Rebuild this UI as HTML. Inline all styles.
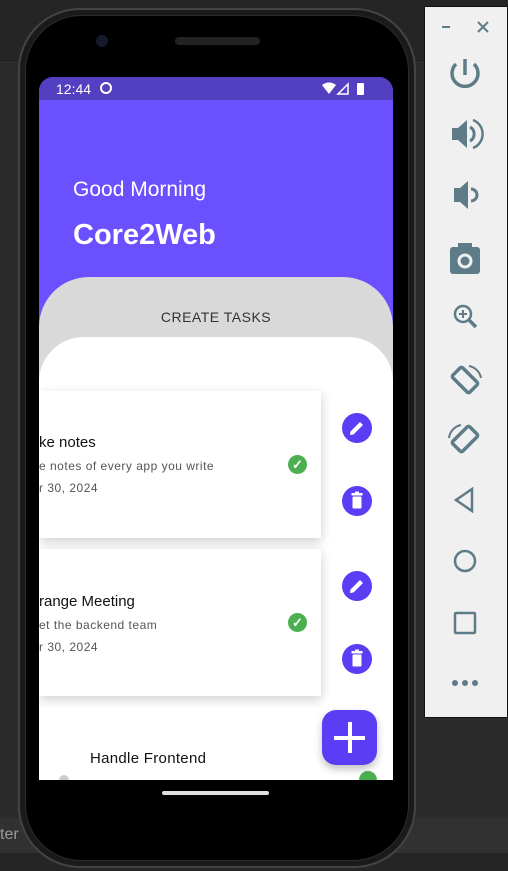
<!DOCTYPE html>
<html><head><meta charset="utf-8">
<style>
*{margin:0;padding:0;box-sizing:border-box}
body{width:508px;height:871px;background:#2b2b2b;position:relative;overflow:hidden;font-family:"Liberation Sans",sans-serif}
.abs{position:absolute}
</style></head><body>
<div class="abs" style="left:0;top:0;width:508px;height:62px;background:#252526"></div>
<div class="abs" style="left:0;top:62px;width:508px;height:34px;background:#2a2a2a;border-top:1px solid #333"></div>
<div class="abs" style="left:0;top:818px;width:508px;height:35px;background:#313131"></div>
<div class="abs" style="left:0;top:853px;width:508px;height:18px;background:#252525"></div>
<div class="abs" style="left:0;top:826px;color:#9a9a9a;font-size:16px">ter</div>

<div class="abs" style="left:18px;top:8px;width:398px;height:860px;border-radius:62px;background:#1a1a1a;border:2px solid #444"></div>
<div class="abs" style="left:25px;top:15px;width:384px;height:846px;border-radius:56px;background:#000;border:1px solid #2c2c2c"></div>
<div class="abs" style="left:96px;top:35px;width:12px;height:12px;border-radius:50%;background:#141a2a"></div>
<div class="abs" style="left:175px;top:37px;width:85px;height:8px;border-radius:4px;background:#222"></div>
<div class="abs" style="left:162px;top:791px;width:107px;height:4px;border-radius:2px;background:#e0e0e0"></div>

<div class="abs" style="left:39px;top:77px;width:354px;height:703px;background:#6a50ff;border-radius:14px 14px 0 0;overflow:hidden">
  <div class="abs" style="left:0;top:0;width:354px;height:23px;background:#5340c0"></div>
  <div class="abs" style="left:17px;top:4px;color:#fff;font-size:14px">12:44</div>
  <div class="abs" style="left:61px;top:5px;width:12px;height:12px;border-radius:50%;border:2px solid #fff"></div>
  <svg class="abs" style="left:283px;top:5px" width="48" height="14" viewBox="0 0 48 14">
    <path d="M0 3 Q7 -2 14 3 L7 12Z" fill="#fff"/>
    <path d="M16 12 L26 2 L26 12Z" fill="none" stroke="#fff" stroke-width="1.5"/>
    <rect x="35" y="1" width="7" height="12" rx="1" fill="#fff"/>
  </svg>
  <div class="abs" style="left:34px;top:101px;color:#fff;font-size:21px">Good Morning</div>
  <div class="abs" style="left:34px;top:142px;color:#fff;font-size:29px;font-weight:bold">Core2Web</div>

  <div class="abs" style="left:0;top:200px;width:354px;height:520px;background:#d9d9d9;border-radius:50px 50px 0 0"></div>
  <div class="abs" style="left:0;top:232px;width:354px;text-align:center;color:#333;font-size:14px;letter-spacing:.5px">CREATE TASKS</div>
  <div class="abs" style="left:0;top:260px;width:354px;height:460px;background:#fff;border-radius:45px 45px 0 0"></div>

  <div class="abs" style="left:0;top:314px;width:282px;height:147px;background:#fff;box-shadow:0 6px 10px rgba(0,0,0,.12),3px 0 10px rgba(0,0,0,.06)"></div>
  <div class="abs" style="left:0;top:357px;color:#111;font-size:15px">ke notes</div>
  <div class="abs" style="left:0;top:382px;color:#555;font-size:12px;letter-spacing:.5px">e notes of every app you write</div>
  <div class="abs" style="left:0;top:404px;color:#555;font-size:12px;letter-spacing:.5px">r 30, 2024</div>
  <div class="abs" style="left:249px;top:378px;width:19px;height:19px;border-radius:50%;background:#4caf50;color:#fff;font-size:13px;line-height:19px;text-align:center;font-weight:bold">✓</div>

  <div class="abs" style="left:0;top:472px;width:282px;height:147px;background:#fff;box-shadow:0 6px 10px rgba(0,0,0,.12),3px 0 10px rgba(0,0,0,.06)"></div>
  <div class="abs" style="left:0;top:516px;color:#111;font-size:15px">range Meeting</div>
  <div class="abs" style="left:0;top:541px;color:#555;font-size:12px;letter-spacing:.5px">et the backend team</div>
  <div class="abs" style="left:0;top:563px;color:#555;font-size:12px;letter-spacing:.5px">r 30, 2024</div>
  <div class="abs" style="left:249px;top:536px;width:19px;height:19px;border-radius:50%;background:#4caf50;color:#fff;font-size:13px;line-height:19px;text-align:center;font-weight:bold">✓</div>

  <svg class="abs" style="left:303px;top:336px" width="30" height="200" viewBox="0 0 30 200">
    <circle cx="15" cy="15" r="15" fill="#5b3df5"/>
    <path d="M8 22 L8.5 18.5 L18 9 L21 12 L11.5 21.5Z" fill="#fff"/>
    <circle cx="15" cy="88" r="15" fill="#5b3df5"/>
    <rect x="9.5" y="80" width="11" height="2.5" fill="#fff"/><rect x="13" y="78.5" width="4" height="2" fill="#fff"/>
    <rect x="10.5" y="83.5" width="9" height="12" rx="1" fill="#fff"/>
    <circle cx="15" cy="173" r="15" fill="#5b3df5"/>
    <path d="M8 180 L8.5 176.5 L18 167 L21 170 L11.5 179.5Z" fill="#fff"/>
  </svg>
  <svg class="abs" style="left:303px;top:567px" width="30" height="30" viewBox="0 0 30 30">
    <circle cx="15" cy="15" r="15" fill="#5b3df5"/>
    <rect x="9.5" y="7" width="11" height="2.5" fill="#fff"/><rect x="13" y="5.5" width="4" height="2" fill="#fff"/>
    <rect x="10.5" y="10.5" width="9" height="12" rx="1" fill="#fff"/>
  </svg>

  <div class="abs" style="left:0;top:631px;width:354px;height:80px;background:#fff"></div>
  <div class="abs" style="left:51px;top:673px;color:#111;font-size:15px;letter-spacing:.3px">Handle Frontend</div>
  <div class="abs" style="left:20px;top:698px;width:10px;height:10px;border-radius:50%;background:#ccc"></div>
  <div class="abs" style="left:320px;top:694px;width:18px;height:18px;border-radius:50%;background:#4caf50"></div>

  <div class="abs" style="left:283px;top:633px;width:55px;height:55px;border-radius:14px;background:#5b3df5;box-shadow:0 4px 8px rgba(0,0,0,.25)"></div>
  <div class="abs" style="left:295px;top:659px;width:31px;height:4px;background:#fff"></div>
  <div class="abs" style="left:309px;top:645px;width:4px;height:31px;background:#fff"></div>
</div>

<div class="abs" style="left:424px;top:6px;width:84px;height:712px;background:#f0f0f0;border:1px solid #111"></div>
<svg class="abs" style="left:425px;top:7px" width="82" height="710" viewBox="0 0 82 710" fill="none" stroke="#5e7c88" stroke-width="3.5">
  <path d="M17 20 H25" stroke-width="2"/>
  <path d="M53 15 L63 25 M63 15 L53 25" stroke-width="2"/>
  <path d="M40 52 V68" /><path d="M31 57 A13 13 0 1 0 49 57"/>
  <path d="M27 121 H33 L42 113 V141 L33 133 H27Z" fill="#5e7c88" stroke="none"/>
  <path d="M45 120 A8 8 0 0 1 45 134" stroke-width="3"/>
  <path d="M48 113 A15 15 0 0 1 48 141" stroke-width="2.5"/>
  <path d="M29 181 H35 L43 174 V202 L35 195 H29Z" fill="#5e7c88" stroke="none"/>
  <path d="M46 182 A6 6 0 0 1 46 194" stroke-width="3"/>
  <rect x="25" y="240" width="30" height="27" rx="3" fill="#5e7c88" stroke="none"/>
  <rect x="33" y="236" width="14" height="6" fill="#5e7c88" stroke="none"/>
  <circle cx="40" cy="254" r="6" stroke="#f0f0f0" stroke-width="3"/>
  <circle cx="38" cy="307" r="8" stroke-width="2.5"/><path d="M44 313 L51 320"/>
  <path d="M38 303 V311 M34 307 H42" stroke-width="2"/>
  <rect x="33" y="361" width="14" height="24" rx="2" stroke-width="3.5" transform="rotate(-45 40 373)"/>
  <path d="M44 359 A15 15 0 0 1 56 371" stroke-width="2"/>
  <rect x="33" y="420" width="14" height="24" rx="2" stroke-width="3.5" transform="rotate(45 40 432)"/>
  <path d="M24 431 A15 15 0 0 1 36 418" stroke-width="2"/>
  <path d="M47 482 V504 L31 493Z" stroke-width="2.5"/>
  <circle cx="40" cy="554" r="10" stroke-width="2.5"/>
  <rect x="30" y="606" width="20" height="20" rx="1" stroke-width="2.5"/>
  <circle cx="30" cy="676" r="3" fill="#5e7c88" stroke="none"/>
  <circle cx="40" cy="676" r="3" fill="#5e7c88" stroke="none"/>
  <circle cx="50" cy="676" r="3" fill="#5e7c88" stroke="none"/>
</svg>
</body></html>
